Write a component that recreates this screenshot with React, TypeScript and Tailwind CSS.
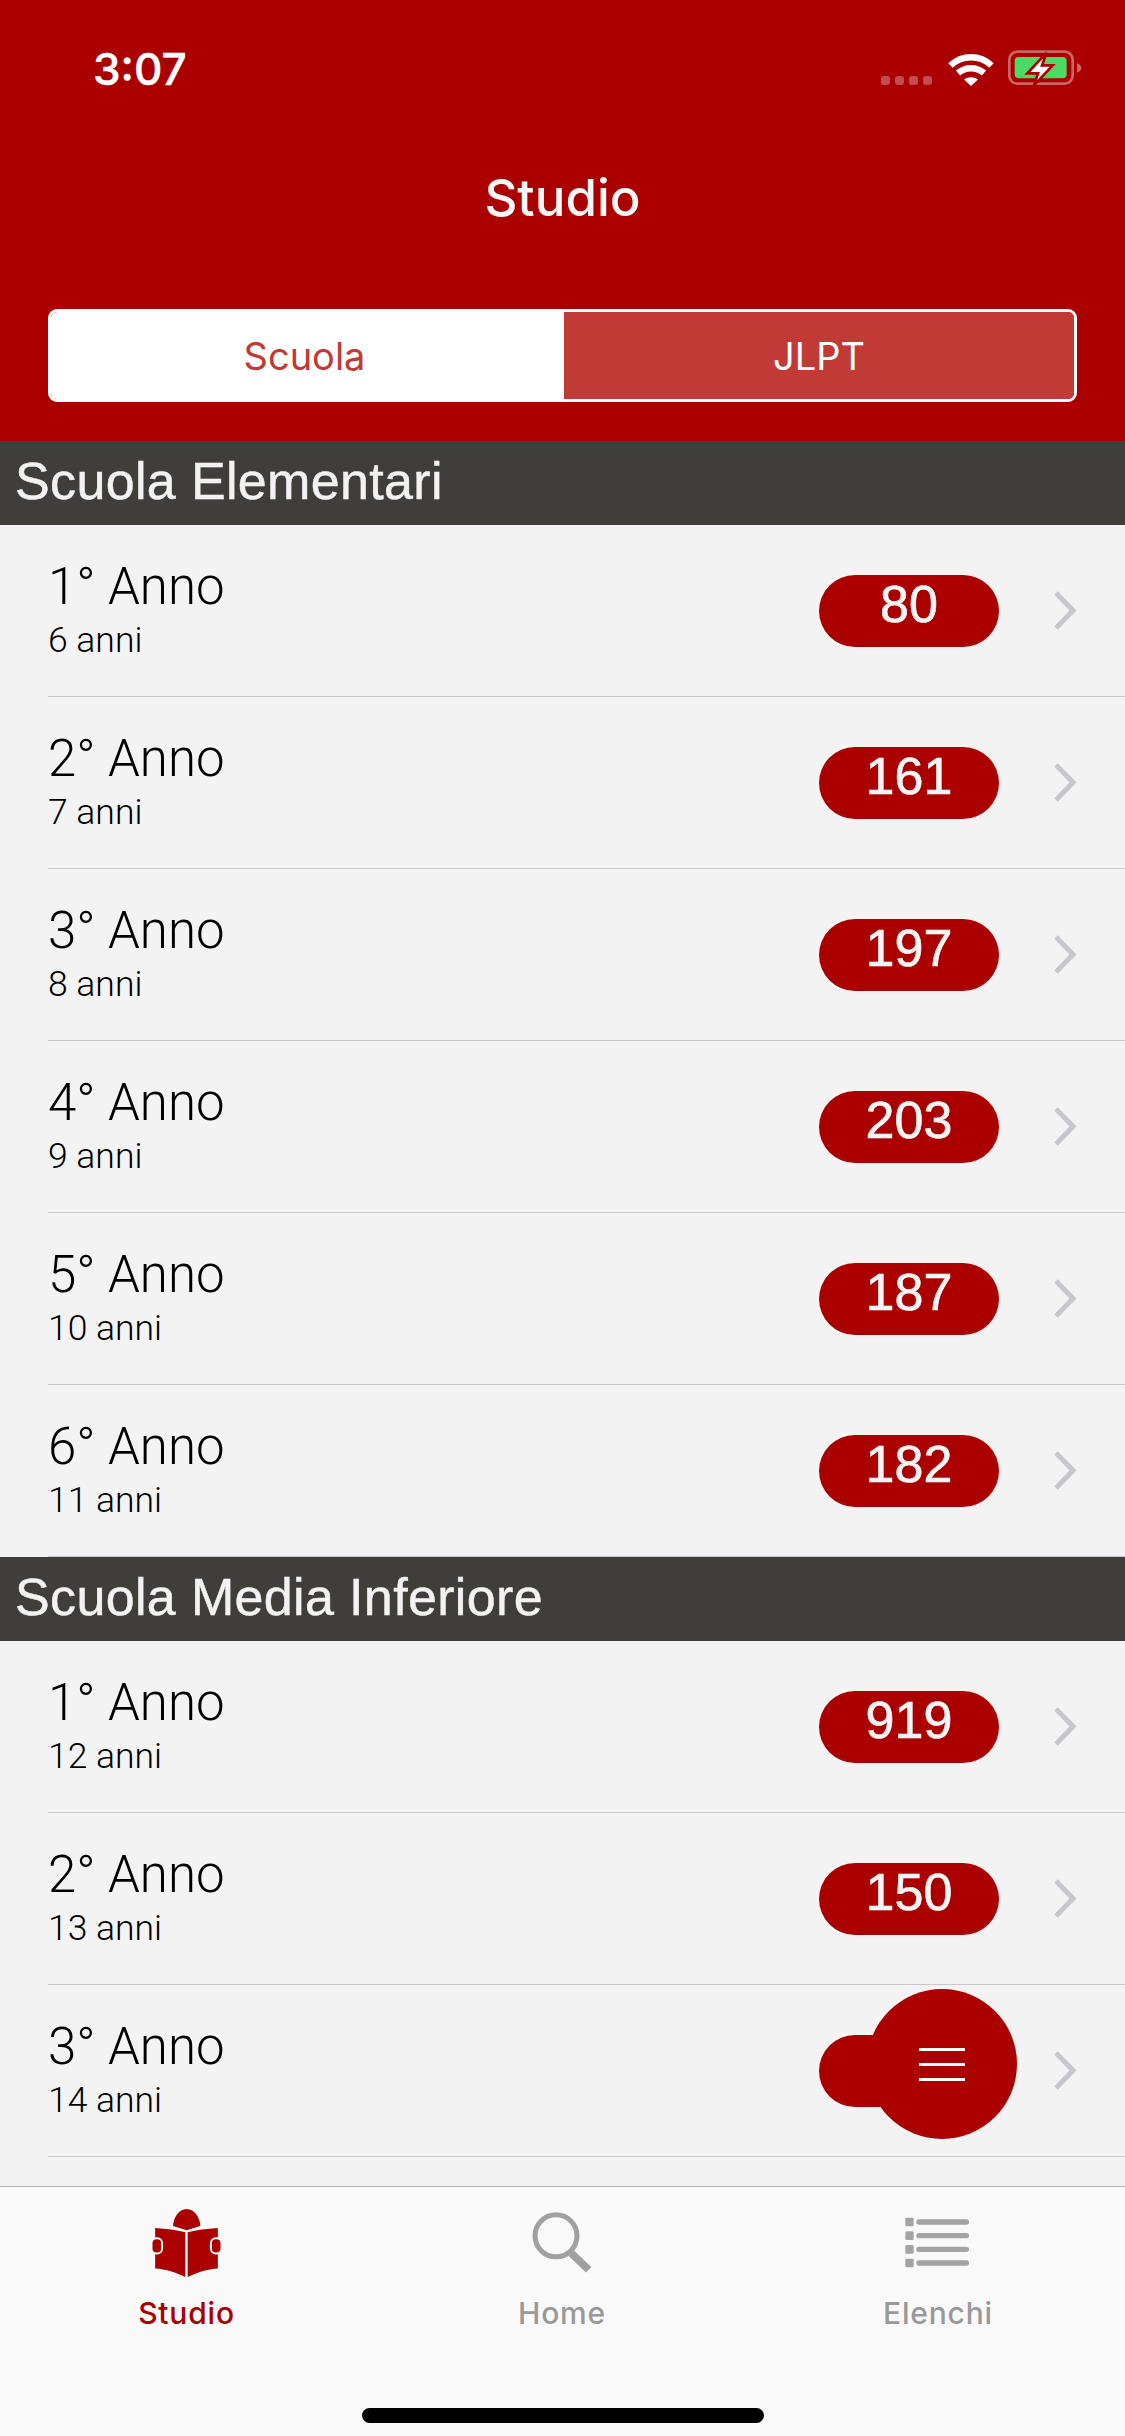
const sections = [
  {
    title: 'Scuola Elementari',
    rows: [
      { name: '1° Anno', age: '6 anni', count: '80' },
      { name: '2° Anno', age: '7 anni', count: '161' },
      { name: '3° Anno', age: '8 anni', count: '197' },
      { name: '4° Anno', age: '9 anni', count: '203' },
      { name: '5° Anno', age: '10 anni', count: '187' },
      { name: '6° Anno', age: '11 anni', count: '182' },
    ],
  },
  {
    title: 'Scuola Media Inferiore',
    rows: [
      { name: '1° Anno', age: '12 anni', count: '919' },
      { name: '2° Anno', age: '13 anni', count: '150' },
      { name: '3° Anno', age: '14 anni', count: '' },
    ],
  },
];

function WifiIcon() {
  return (
    <svg width="46" height="34" viewBox="0 0 46 34" fill="none">
      <path d="M2.500 13.500C14 2.500 32 2.500 43.500 13.500" stroke="white" strokeWidth="6.500" />
      <path d="M10 21C17.500 14.500 28.500 14.500 36 21" stroke="white" strokeWidth="6.500" />
      <path d="M16 27.500C20 24.500 26 24.500 30 27.500L23 34Z" fill="white" />
    </svg>
  );
}

function BatteryIcon() {
  return (
    <svg width="74" height="36" viewBox="0 0 222 108" fill="none">
      <rect x="4" y="5" width="190" height="96" rx="24" stroke="white" strokeOpacity="0.4" strokeWidth="8" />
      <rect x="20" y="21" width="156" height="64" rx="12" fill="#4cd964" />
      <path d="M207 40C216 43 220 48 220 54C220 60 216 65 207 68Z" fill="white" fillOpacity="0.4" />
      <path d="M116 8L58 70H90L78 106L134 46H102Z" fill="white" stroke="#aa0000" strokeWidth="8" />
    </svg>
  );
}

function BookIcon() {
  return (
    <svg width="69" height="68" viewBox="155 117 207 205">
      <path d="M218 168C218 144 236 117 259 117C282 117 300 144 300 168L259 181Z" fill="#aa0000" />
      <path d="M164 174C198 176 228 180 255 187V322C228 308 196 298 164 296Z" fill="#aa0000" />
      <path d="M353 174C319 176 289 180 262 187V322C289 308 321 298 353 296Z" fill="#aa0000" />
      <rect x="153" y="205" width="32" height="46" rx="15" fill="#aa0000" stroke="#f9f9f9" strokeWidth="6" />
      <rect x="332" y="205" width="32" height="46" rx="15" fill="#aa0000" stroke="#f9f9f9" strokeWidth="6" />
    </svg>
  );
}

function SearchIcon() {
  return (
    <svg width="60" height="62" viewBox="98 127 180 185" fill="none">
      <circle cx="170" cy="198" r="63" stroke="#a0a0a0" strokeWidth="15" />
      <path d="M216 250L268 300" stroke="#a0a0a0" strokeWidth="23" />
    </svg>
  );
}

function ListIcon() {
  return (
    <svg width="64" height="52" viewBox="1213 143 192 156" fill="#a3a3a3">
      {[145, 186, 227, 268].map((y) => (
        <g key={y}>
          <rect x="1214" y={y} width="25" height="26" rx="4" />
          <rect x="1247" y={y + 5} width="158" height="16" rx="8" />
        </g>
      ))}
    </svg>
  );
}

function Row({ name, age, count }: { name: string; age: string; count: string }) {
  return (
    <div className="ml-[48px] flex h-[172px] items-center border-b border-[#c8c7cc] pr-[48px]">
      <div className="flex-1 pb-[3px] [font-family:Roboto,sans-serif] font-light text-black">
        <div className="text-[51px] leading-[60px]">{name}</div>
        <div className="mt-[2px] text-[35.500px] leading-[42px]">{age}</div>
      </div>
      <div className="flex h-[72px] w-[180px] items-center justify-center rounded-full bg-[#aa0000] pb-[14px] [font-family:'Liberation_Sans',sans-serif] text-[52px] leading-none text-[#f5f5f5] [-webkit-text-stroke:0.7px_#f5f5f5]">
        {count}
      </div>
      <svg className="ml-[55px]" width="23" height="39" viewBox="0 0 23 39" fill="none">
        <path d="M2 2L19 19.500L2 37" stroke="#c7c7cc" strokeWidth="5" />
      </svg>
    </div>
  );
}

export default function App() {
  return (
    <div className="relative flex h-[2436px] w-[1125px] flex-col overflow-hidden bg-[#f3f3f3]">
      <header className="h-[441px] bg-[#aa0000]">
        <div className="flex h-[134px] items-start justify-between pl-[93px] pr-[43px] pt-[42px]">
          <span className="[font-family:Inter,sans-serif] text-[44px] font-medium leading-[54px] text-white [-webkit-text-stroke:0.5px_white]">3:07</span>
          <div className="flex items-end pt-[8px]">
            <div className="mr-[16px] flex gap-[5px] pb-[1px]">
              {[0, 1, 2, 3].map((d) => (
                <div key={d} className="h-[9px] w-[9px] rounded-[3px] bg-white/30" />
              ))}
            </div>
            <WifiIcon />
            <div className="ml-[14px]">
              <BatteryIcon />
            </div>
          </div>
        </div>
        <h1 className="pt-[33px] text-center [font-family:Inter,sans-serif] text-[51px] font-medium leading-[62px] text-[#f7f7f7]">
          Studio
        </h1>
        <div className="mx-[48px] mt-[80px] flex h-[93px] overflow-hidden rounded-[9px] border-[3px] border-white text-[38px] leading-none [font-family:Inter,sans-serif]">
          <div className="flex w-[513px] items-center justify-center bg-white pr-[6px] text-[#c13a35]">Scuola</div>
          <div className="flex flex-1 items-center justify-center bg-[#c13a35] text-white">JLPT</div>
        </div>
      </header>

      <main className="min-h-0 flex-1 overflow-hidden">
        {sections.map((s) => (
          <section key={s.title}>
            <h2 className="flex h-[84px] items-center bg-[#3f3e3a] pb-[4px] pl-[15px] [font-family:'Liberation_Sans',sans-serif] text-[52px] tracking-[0.35px] text-[#f2f2f2] [-webkit-text-stroke:0.5px_#f2f2f2]">
              {s.title}
            </h2>
            {s.rows.map((r) => (
              <Row key={s.title + r.name} {...r} />
            ))}
          </section>
        ))}
      </main>

      <nav className="h-[250px] border-t border-[#adadad] bg-[#f9f9f9]">
        <div className="grid grid-cols-[373px_378px_374px] [font-family:Inter,sans-serif] text-[30px] font-[450] leading-[36px] tracking-[0.8px] text-[#999999]">
          <div className="flex flex-col items-center">
            <div className="mt-[22px] flex h-[68px] items-end"><BookIcon /></div>
            <span className="mt-[18px] text-[#aa0000]">Studio</span>
          </div>
          <div className="flex flex-col items-center">
            <div className="mt-[22px] flex h-[68px] items-center"><SearchIcon /></div>
            <span className="mt-[18px]">Home</span>
          </div>
          <div className="flex flex-col items-center">
            <div className="mt-[22px] mr-[3px] flex h-[68px] items-center"><ListIcon /></div>
            <span className="mt-[18px]">Elenchi</span>
          </div>
        </div>
        <div className="mx-auto mt-[77px] h-[15px] w-[402px] rounded-full bg-black" />
      </nav>

      {/* floating menu button */}
      <button className="absolute left-[867px] top-[1989px] flex h-[150px] w-[150px] flex-col items-center justify-center gap-[12px] rounded-full bg-[#aa0000]">
        <span className="h-[3px] w-[46px] bg-white" />
        <span className="h-[3px] w-[46px] bg-white" />
        <span className="h-[3px] w-[46px] bg-white" />
      </button>
    </div>
  );
}
